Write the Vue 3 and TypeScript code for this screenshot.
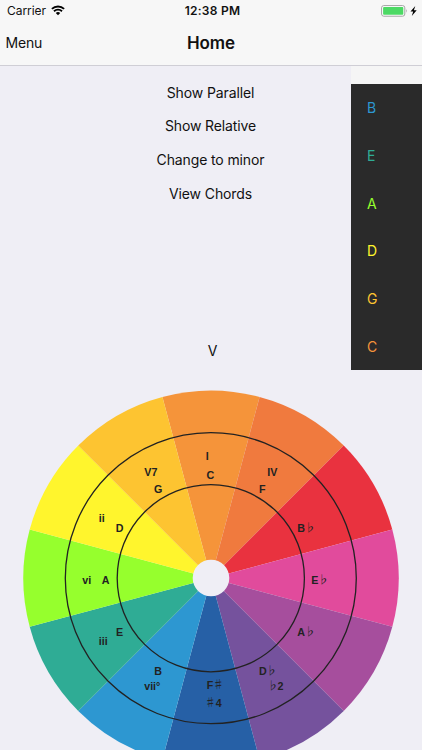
<script setup lang="ts">
interface Slice { color: string }
interface Mark { text: string; x: number; y: number; kind?: 'accidental' }
interface Note { name: string; color: string }

const actions: string[] = ['Show Parallel', 'Show Relative', 'Change to minor', 'View Chords']

const notes: Note[] = [
  { name: 'B', color: '#2d97d1' },
  { name: 'E', color: '#2fac95' },
  { name: 'A', color: '#96ff2d' },
  { name: 'D', color: '#fff52d' },
  { name: 'G', color: '#fdc431' },
  { name: 'C', color: '#f5943a' },
]

/* Clockwise from the top slice */
const slices: Slice[] = [
  '#f5943a', '#f07a3e', '#e9323f', '#e14b9c', '#a64e9d', '#75529d',
  '#2660a6', '#2d97d1', '#2fac95', '#96ff2d', '#fff52d', '#fdc431',
].map((color) => ({ color }))

const CX = 211
const CY = 188.2
const R = 187.7

function slicePath(i: number): string {
  const point = (deg: number): string => {
    const a = (deg * Math.PI) / 180
    return `${(CX + R * Math.sin(a)).toFixed(2)} ${(CY - R * Math.cos(a)).toFixed(2)}`
  }
  return `M${CX} ${CY}L${point(i * 30 - 15)}A${R} ${R} 0 0 1 ${point(i * 30 + 15)}Z`
}

const marks: Mark[] = [
  { text: 'I', x: 205.8, y: 69.6 },
  { text: 'C', x: 206.5, y: 89.2 },
  { text: 'V7', x: 144.3, y: 86.2 },
  { text: 'G', x: 154, y: 103.2 },
  { text: 'IV', x: 267.3, y: 86.2 },
  { text: 'F', x: 259, y: 103.2 },
  { text: 'ii', x: 98.8, y: 131.6 },
  { text: 'D', x: 115.8, y: 141.6 },
  { text: 'B', x: 297.3, y: 141.6 },
  { text: '♭', x: 304.2, y: 141.6, kind: 'accidental' },
  { text: 'vi', x: 82.3, y: 193.5 },
  { text: 'A', x: 101.7, y: 194 },
  { text: 'E', x: 311.3, y: 194 },
  { text: '♭', x: 317.6, y: 194, kind: 'accidental' },
  { text: 'iii', x: 98.8, y: 255 },
  { text: 'E', x: 116, y: 246.4 },
  { text: 'A', x: 297.3, y: 246.4 },
  { text: '♭', x: 304.2, y: 246.4, kind: 'accidental' },
  { text: 'B', x: 154.2, y: 284.9 },
  { text: 'vii°', x: 144.2, y: 300.2 },
  { text: 'D', x: 259, y: 284.9 },
  { text: '♭', x: 265.8, y: 284.9, kind: 'accidental' },
  { text: '♭', x: 267, y: 300.4, kind: 'accidental' },
  { text: '2', x: 277.6, y: 300.2 },
  { text: 'F', x: 206.7, y: 298.8 },
  { text: '♯', x: 212.5, y: 299, kind: 'accidental' },
  { text: '♯', x: 204.5, y: 317, kind: 'accidental' },
  { text: '4', x: 215.8, y: 316.8 },
]
</script>

<template>
  <div class="screen">
    <header class="top">
      <div class="status">
        <div class="carrier">
          <span>Carrier</span>
          <svg class="wifi" viewBox="0 0 14 11" width="14" height="11">
            <path d="M.9 3.9a8.8 8.8 0 0 1 12.2 0M3 6.2a5.8 5.8 0 0 1 8 0" fill="none" stroke="#000" stroke-width="1.9" />
            <path d="M4.8 8a3.2 3.2 0 0 1 4.4 0L7 10.3Z" fill="#000" />
          </svg>
        </div>
        <span class="time">12:38 PM</span>
        <svg class="battery" viewBox="0 0 37 12" width="37" height="12">
          <rect x=".6" y=".6" width="23.2" height="10.6" rx="2.2" fill="#fff" stroke="#a2a2a2" />
          <rect x="2.1" y="2.1" width="20.2" height="7.6" rx=".8" fill="#4cd964" />
          <path d="M25 4.1q1.5 1.8 0 3.6Z" fill="#a2a2a2" />
          <path d="M34.3.9 29.5 6.5h2.7l-1.4 4.5 4.9-5.8h-2.8Z" fill="#000" />
        </svg>
      </div>
      <nav class="bar">
        <span class="menu">Menu</span>
        <h1 class="title">Home</h1>
      </nav>
    </header>

    <main class="stage">
      <div class="actions">
        <button v-for="a in actions" :key="a" class="action" type="button">{{ a }}</button>
      </div>
      <p class="degree">V</p>
      <aside class="notes">
        <div class="list">
          <span v-for="n in notes" :key="n.name" class="note" :style="{ color: n.color }">{{ n.name }}</span>
        </div>
      </aside>
    </main>

    <svg class="wheel" viewBox="0 0 422 360" width="422" height="360">
      <path v-for="(s, i) in slices" :key="i" :d="slicePath(i)" :fill="s.color" />
      <circle class="ring" cx="210.8" cy="188.2" r="145.5" />
      <circle class="ring" cx="210.8" cy="188.2" r="93.6" />
      <circle cx="211" cy="188" r="18.3" fill="#efeef5" />
      <text v-for="(m, i) in marks" :key="i" :x="m.x" :y="m.y" :class="['mark', m.kind]">{{ m.text }}</text>
    </svg>
  </div>
</template>

<style>
body {
  margin: 0;
  background: #efeef5;
}
</style>

<style scoped>
.screen {
  width: 422px;
  height: 750px;
  overflow: hidden;
  display: flex;
  flex-direction: column;
  background: #efeef5;
  color: #111;
  font-family: Inter, "Liberation Sans", sans-serif;
}
.top {
  box-sizing: border-box;
  height: 66px;
  flex: none;
  background: #f7f7f7;
  border-bottom: 1px solid #cfced5;
}
.status,
.bar {
  display: grid;
  grid-template-columns: 1fr auto 1fr;
  align-items: center;
}
.status {
  height: 21px;
  padding: 0 4px 0 7px;
}
.carrier {
  display: flex;
  align-items: center;
  gap: 5.5px;
  font-size: 12px;
  letter-spacing: -0.05px;
}
.time {
  font-size: 12px;
  font-weight: 600;
  letter-spacing: 0.25px;
}
.battery {
  justify-self: end;
}
.bar {
  height: 43px;
  padding: 0 5.6px;
}
.menu {
  font-size: 14px;
  letter-spacing: -0.2px;
}
.title {
  margin: 0;
  font-size: 17px;
  font-weight: 600;
  letter-spacing: -0.1px;
}
.stage {
  position: relative;
  height: 324px;
  flex: none;
  display: flex;
  flex-direction: column;
  justify-content: space-between;
  align-items: center;
}
.actions {
  display: flex;
  flex-direction: column;
  padding: 9.3px 1px 0 0;
}
.action {
  height: 33.7px;
  padding: 0;
  border: 0;
  background: none;
  color: inherit;
  font: inherit;
  font-size: 14px;
  letter-spacing: -0.12px;
}
.degree {
  margin: 0;
  padding: 0 0 30px 3px;
  font-size: 14px;
  line-height: 18px;
}
.notes {
  position: absolute;
  top: 0;
  right: 0;
  width: 70.7px;
  padding-top: 18px;
  background: #f5f5f5;
}
.list {
  box-sizing: border-box;
  height: 285.6px;
  display: flex;
  flex-direction: column;
  background: #2a2a2a;
}
.note {
  flex: none;
  height: 47.8px;
  padding-left: 15.6px;
  font-size: 14px;
  line-height: 48px;
}
.wheel {
  display: block;
  flex: none;
}
.ring {
  fill: none;
  stroke: #222;
  stroke-width: 1.3;
}
.mark {
  fill: #222;
  font-family: "Liberation Sans", Arial, sans-serif;
  font-size: 10.7px;
  font-weight: 700;
}
.accidental {
  font-family: "Noto Sans CJK JP", "DejaVu Sans", sans-serif;
  font-size: 11.6px;
  font-weight: 400;
}
</style>
